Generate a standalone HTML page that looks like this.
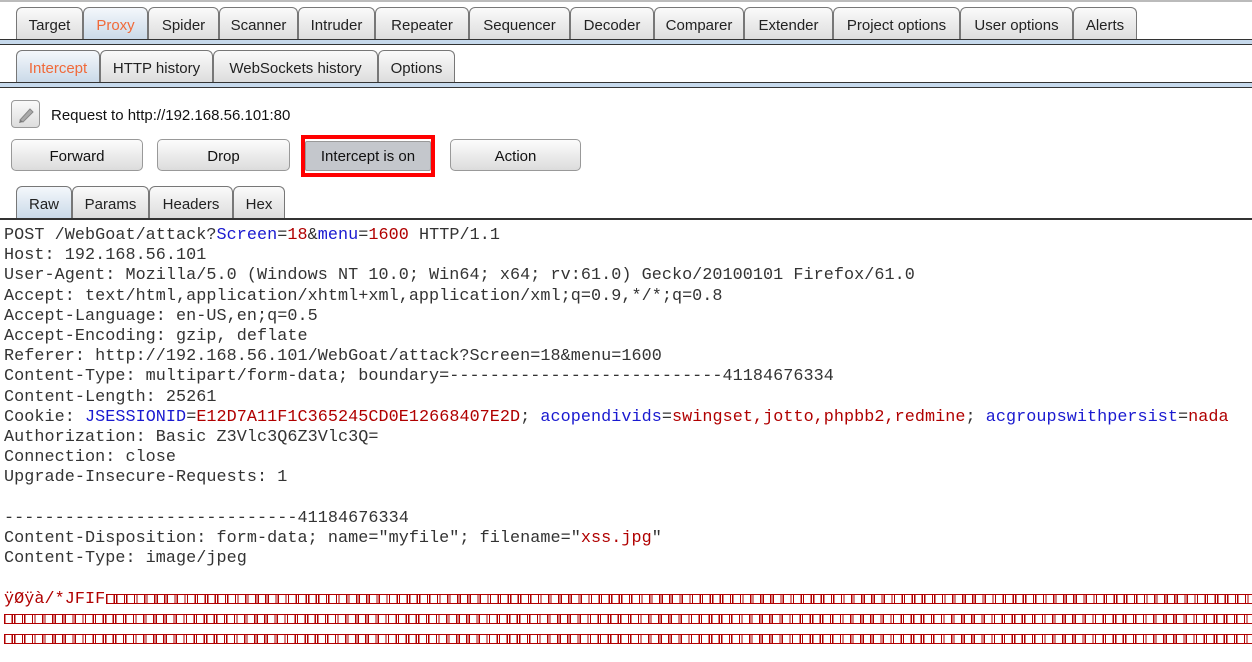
<!DOCTYPE html>
<html><head><meta charset="utf-8"><style>
*{box-sizing:border-box;margin:0;padding:0}
body{width:1252px;height:662px;background:#fff;position:relative;overflow:hidden;font-family:"Liberation Sans",Arial,sans-serif;font-size:15px;color:#111}
.tab{position:absolute;border:1px solid #777;border-bottom:none;border-radius:6px 6px 0 0;background:linear-gradient(#fafafa,#dcdcdc);text-align:center;color:#222;padding-top:1px}
.tab.sel{background:linear-gradient(#f4f7fb,#c9d9e8);color:#f06a3a}
.bar{position:absolute;left:0;width:1252px;border-top:1px solid #333;border-bottom:1px solid #333;background:#c6d9ec}
.btn{position:absolute;top:139px;height:32px;border:1px solid #999;border-radius:5px;background:linear-gradient(#fcfcfc,#dcdcdc);text-align:center;line-height:33px;font-size:15px}
pre{position:absolute;left:4px;top:226px;font-family:"Liberation Mono","Courier New",monospace;font-size:16.8px;line-height:20.2px;color:#333;letter-spacing:0.05px}
.b{color:#1a1ad0}.r{color:#b00000}
.bx{position:absolute;height:10px;border-bottom:1.3px solid #b00000;background:repeating-linear-gradient(90deg,#b00000 0 1.3px,transparent 1.3px 7.7px,#b00000 7.7px 9px,transparent 9px 10.1px),linear-gradient(#b00000,#b00000) 0 0/100% 1.3px no-repeat}
</style></head><body>
<div style="position:absolute;left:0;top:0;width:1252px;height:2px;background:#bbb"></div>
<div class="tab" style="left:16px;top:7px;width:67px;height:33px;line-height:33px">Target</div>
<div class="tab sel" style="left:83px;top:7px;width:65px;height:33px;line-height:33px">Proxy</div>
<div class="tab" style="left:148px;top:7px;width:71px;height:33px;line-height:33px">Spider</div>
<div class="tab" style="left:219px;top:7px;width:79px;height:33px;line-height:33px">Scanner</div>
<div class="tab" style="left:298px;top:7px;width:77px;height:33px;line-height:33px">Intruder</div>
<div class="tab" style="left:375px;top:7px;width:94px;height:33px;line-height:33px">Repeater</div>
<div class="tab" style="left:469px;top:7px;width:101px;height:33px;line-height:33px">Sequencer</div>
<div class="tab" style="left:570px;top:7px;width:84px;height:33px;line-height:33px">Decoder</div>
<div class="tab" style="left:654px;top:7px;width:90px;height:33px;line-height:33px">Comparer</div>
<div class="tab" style="left:744px;top:7px;width:89px;height:33px;line-height:33px">Extender</div>
<div class="tab" style="left:833px;top:7px;width:127px;height:33px;line-height:33px">Project options</div>
<div class="tab" style="left:960px;top:7px;width:113px;height:33px;line-height:33px">User options</div>
<div class="tab" style="left:1073px;top:7px;width:64px;height:33px;line-height:33px">Alerts</div>
<div class="bar" style="top:39px;height:6px"></div>

<div class="tab sel" style="left:16px;top:50px;width:84px;height:33px;line-height:33px">Intercept</div>
<div class="tab" style="left:100px;top:50px;width:113px;height:33px;line-height:33px">HTTP history</div>
<div class="tab" style="left:213px;top:50px;width:165px;height:33px;line-height:33px">WebSockets history</div>
<div class="tab" style="left:378px;top:50px;width:77px;height:33px;line-height:33px">Options</div>
<div class="bar" style="top:82px;height:6px"></div>

<div style="position:absolute;left:11px;top:100px;width:29px;height:28px;border:1px solid #999;border-radius:4px;background:linear-gradient(#fafafa,#ddd)">
<svg width="27" height="26" viewBox="0 0 27 26"><path d="M8 19 L18 8 L21 11 L11 21 Z" fill="#aaa" stroke="#888"/><path d="M8 19 L7 22 L11 21" fill="#777"/></svg></div>
<div style="position:absolute;left:51px;top:107px;font-size:15px">Request to http://192.168.56.101:80</div>

<div class="btn" style="left:11px;width:132px">Forward</div>
<div class="btn" style="left:157px;width:133px">Drop</div>
<div style="position:absolute;left:301px;top:135px;width:134px;height:42px;border:4px solid #f00"></div>
<div class="btn" style="left:305px;top:141px;height:30px;width:126px;border-radius:2px;background:#c4c7cc;line-height:30px">Intercept is on</div>
<div class="btn" style="left:450px;width:131px">Action</div>

<div class="tab sel" style="left:16px;top:186px;width:56px;height:33px;line-height:33px;color:#222">Raw</div>
<div class="tab" style="left:72px;top:186px;width:77px;height:33px;line-height:33px">Params</div>
<div class="tab" style="left:149px;top:186px;width:84px;height:33px;line-height:33px">Headers</div>
<div class="tab" style="left:233px;top:186px;width:52px;height:33px;line-height:33px">Hex</div>
<div style="position:absolute;left:0;top:218px;width:1252px;height:2px;background:#333"></div>

<pre>POST /WebGoat/attack?<span class="b">Screen</span>=<span class="r">18</span>&amp;<span class="b">menu</span>=<span class="r">1600</span> HTTP/1.1
Host: 192.168.56.101
User-Agent: Mozilla/5.0 (Windows NT 10.0; Win64; x64; rv:61.0) Gecko/20100101 Firefox/61.0
Accept: text/html,application/xhtml+xml,application/xml;q=0.9,*/*;q=0.8
Accept-Language: en-US,en;q=0.5
Accept-Encoding: gzip, deflate
Referer: http://192.168.56.101/WebGoat/attack?Screen=18&amp;menu=1600
Content-Type: multipart/form-data; boundary=---------------------------41184676334
Content-Length: 25261
Cookie: <span class="b">JSESSIONID</span>=<span class="r">E12D7A11F1C365245CD0E12668407E2D</span>; <span class="b">acopendivids</span>=<span class="r">swingset,jotto,phpbb2,redmine</span>; <span class="b">acgroupswithpersist</span>=<span class="r">nada</span>
Authorization: Basic Z3Vlc3Q6Z3Vlc3Q=
Connection: close
Upgrade-Insecure-Requests: 1

-----------------------------41184676334
Content-Disposition: form-data; name="myfile"; filename="<span class="r">xss.jpg</span>"
Content-Type: image/jpeg

<span class="r">ÿØÿà/*JFIF</span></pre>
<div class="bx" style="left:106px;top:594px;width:1148px"></div>
<div class="bx" style="left:4px;top:614px;width:1250px"></div>
<div class="bx" style="left:4px;top:634px;width:1250px"></div>
</body></html>
